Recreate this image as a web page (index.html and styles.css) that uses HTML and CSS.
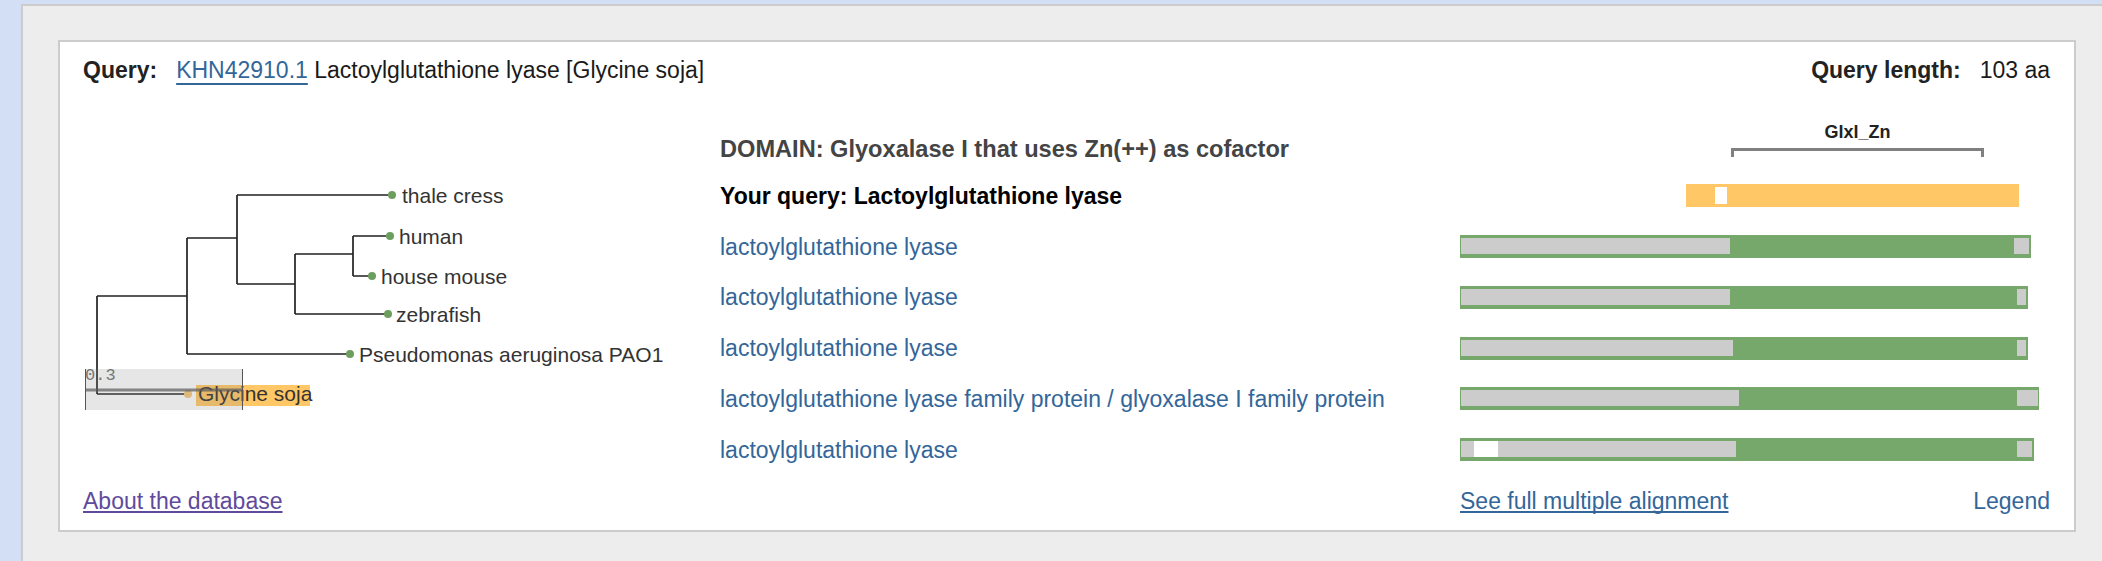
FILE: index.html
```html
<!DOCTYPE html>
<html>
<head>
<meta charset="utf-8">
<title>Domain alignment</title>
<link rel="stylesheet" href="styles.css">
</head>
<body>
<div class="panel">
  <div class="card">
    <div class="header">
      <div class="query"><span class="label">Query:</span><a class="acc" href="#">KHN42910.1</a> Lactoylglutathione lyase [Glycine soja]</div>
      <div class="qlen"><span class="label">Query length:</span>103 aa</div>
    </div>

    <div class="grid">
      <div class="tree">
        <svg width="637" height="365" viewBox="83 110 637 365" xmlns="http://www.w3.org/2000/svg">
          <g class="branches">
            <path d="M237 195H388M237 195V284M353 236H386M353 276H371M353 236V276M295 254H353M295 314H387M295 254V314M237 284H295M187 238H237M187 354H350M187 238V354M97 296H187M97 296V394M97 394H188"/>
          </g>
          <g class="leaves">
            <circle cx="392" cy="195" r="4"/>
            <circle cx="390" cy="236" r="4"/>
            <circle cx="372" cy="276" r="4"/>
            <circle cx="388" cy="314" r="4"/>
            <circle cx="350" cy="354" r="4"/>
          </g>
          <g class="names">
            <text x="402" y="203">thale cress</text>
            <text x="399" y="244">human</text>
            <text x="381" y="284">house mouse</text>
            <text x="396" y="322">zebrafish</text>
            <text x="359" y="362">Pseudomonas aeruginosa PAO1</text>
          </g>
          <rect class="hl" x="196" y="385" width="114" height="21"/>
          <circle class="self" cx="188" cy="394" r="4"/>
          <text class="selfname" x="198" y="401">Glycine soja</text>
          <g class="scale">
            <rect class="scalebox" x="85" y="369" width="158" height="41"/>
            <path class="scaleline" d="M85 390H243"/>
            <path class="scaletick" d="M85.5 369V410M242.5 369V410"/>
            <text class="scaletext" x="85" y="380">0.3</text>
          </g>
        </svg>
      </div>

      <div class="txt domain">DOMAIN: Glyoxalase I that uses Zn(++) as cofactor</div>
      <div class="track domtrack">
        <div class="dmark" style="margin-left:271px;width:253px">
          <div class="dname">Glxl_Zn</div>
          <div class="bracket"></div>
        </div>
      </div>

      <div class="txt yq">Your query: Lactoylglutathione lyase</div>
      <div class="track">
        <div class="qbar" style="margin-left:226px;width:333px"><span class="sp" style="width:29px"></span><span class="w" style="width:12px"></span></div>
      </div>

      <div class="txt"><a class="hit" href="#">lactoylglutathione lyase</a></div>
      <div class="track">
        <div class="sbar" style="width:571px;padding-right:2px"><span class="g" style="width:269px"></span><span class="fill"></span><span class="g" style="width:15px"></span></div>
      </div>

      <div class="txt"><a class="hit" href="#">lactoylglutathione lyase</a></div>
      <div class="track">
        <div class="sbar" style="width:568px;padding-right:2px"><span class="g" style="width:269px"></span><span class="fill"></span><span class="g" style="width:9px"></span></div>
      </div>

      <div class="txt"><a class="hit" href="#">lactoylglutathione lyase</a></div>
      <div class="track">
        <div class="sbar" style="width:568px;padding-right:2px"><span class="g" style="width:272px"></span><span class="fill"></span><span class="g" style="width:9px"></span></div>
      </div>

      <div class="txt"><a class="hit" href="#">lactoylglutathione lyase family protein / glyoxalase I family protein</a></div>
      <div class="track">
        <div class="sbar" style="width:579px;padding-right:1px"><span class="g" style="width:278px"></span><span class="fill"></span><span class="g" style="width:21px"></span></div>
      </div>

      <div class="txt"><a class="hit" href="#">lactoylglutathione lyase</a></div>
      <div class="track">
        <div class="sbar" style="width:574px;padding-right:2px"><span class="g" style="width:13px"></span><span class="w" style="width:24px"></span><span class="g" style="width:238px"></span><span class="fill"></span><span class="g" style="width:15px"></span></div>
      </div>
    </div>

    <div class="footer">
      <div><a class="visited" href="#">About the database</a></div>
      <div></div>
      <div class="links">
        <a class="ul" href="#">See full multiple alignment</a>
        <a class="plain" href="#">Legend</a>
      </div>
    </div>
  </div>
</div>
</body>
</html>
```

FILE: styles.css
```css
html, body {
  margin: 0;
  padding: 0;
}
body {
  background: #d3dff5;
  font-family: "Liberation Sans", Arial, sans-serif;
  font-size: 23px;
  color: #1a1a1a;
  overflow: hidden;
}
a {
  color: #336699;
  text-decoration: none;
}
.panel {
  margin: 4px 0 0 21px;
  border-top: 2px solid #cccccc;
  border-left: 2px solid #cccccc;
  background: #ededed;
  padding: 34px 26px 40px 35px;
}
.card {
  background: #ffffff;
  border: 2px solid #cccccc;
  padding: 15px 24px 16px 23px;
}
.header {
  display: flex;
  justify-content: space-between;
  line-height: 26px;
  height: 26px;
}
.label {
  font-weight: bold;
  color: #222;
  margin-right: 19px;
}
.acc {
  text-decoration: underline;
  text-decoration-thickness: 2px;
  text-underline-offset: 5px;
  text-decoration-skip-ink: none;
}
.grid {
  display: grid;
  grid-template-columns: 637px 740px 590px;
  grid-template-rows: 60px 51.25px repeat(5, 50.75px);
  align-items: center;
  margin-top: 27px;
}
.tree {
  grid-column: 1;
  grid-row: 1 / 8;
  align-self: start;
  height: 365px;
}
.tree svg {
  display: block;
}
.branches path {
  fill: none;
  stroke: #222;
  stroke-width: 1.7;
}
.leaves circle {
  fill: #6c9e5e;
}
.names text,
.selfname {
  font-family: "Liberation Sans", Arial, sans-serif;
  font-size: 21px;
  fill: #333;
}
.hl {
  fill: #ffc766;
}
.self {
  fill: #f6c77e;
}
.scalebox {
  fill: rgba(128, 128, 128, 0.2);
}
.scaleline {
  stroke: rgba(90, 90, 90, 0.7);
  stroke-width: 3;
}
.scaletick {
  stroke: #555;
  stroke-width: 1;
}
.scaletext {
  font-family: "Liberation Mono", "DejaVu Sans Mono", monospace;
  font-size: 17px;
  fill: #777;
}
.txt {
  grid-column: 2;
  line-height: 26px;
  white-space: nowrap;
}
.track {
  grid-column: 3;
}
.domain {
  font-weight: bold;
  font-size: 23.6px;
  color: #444;
  align-self: end;
  margin-bottom: 8px;
}
.yq {
  font-weight: bold;
  color: #000;
}
.domtrack {
  align-self: end;
  margin-bottom: 13px;
}
.dmark {
  display: flex;
  flex-direction: column;
}
.dname {
  font-size: 18px;
  line-height: 21px;
  font-weight: bold;
  color: #222;
  text-align: center;
  margin-bottom: 5px;
}
.bracket {
  height: 6px;
  border: 3px solid #808080;
  border-bottom: none;
}
.qbar {
  display: flex;
  box-sizing: border-box;
  height: 23px;
  padding: 3px 0;
  background: #ffc766;
}
.sbar {
  display: flex;
  box-sizing: border-box;
  height: 23px;
  padding-top: 3px;
  padding-bottom: 4px;
  padding-left: 1px;
  background: #75a86a;
}
.g {
  background: #cccccc;
}
.w {
  background: #ffffff;
}
.fill {
  flex: 1;
}
.footer {
  display: grid;
  grid-template-columns: 637px 740px 590px;
  margin-top: 13px;
  line-height: 26px;
  height: 26px;
}
.links {
  display: flex;
  justify-content: space-between;
}
.visited {
  color: #5f4a9b;
  text-decoration: underline;
  text-decoration-thickness: 2px;
  text-underline-offset: 2px;
  text-decoration-skip-ink: none;
}
.ul {
  text-decoration: underline;
  text-decoration-thickness: 2px;
  text-underline-offset: 2px;
  text-decoration-skip-ink: none;
}
```
